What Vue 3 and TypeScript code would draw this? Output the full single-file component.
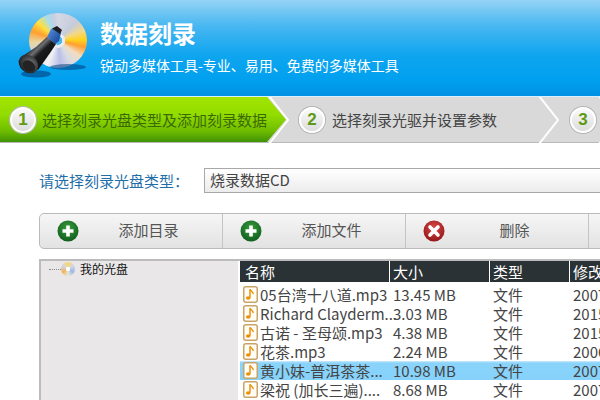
<template>
  <div class="page">
    <header class="banner">
      <div class="logo">
        <div class="disc"></div>
        <svg class="torch" width="100" height="96" viewBox="0 0 100 96">
          <defs>
            <linearGradient id="body" x1="0" y1="0" x2="1" y2="1">
              <stop offset="0" stop-color="#0e0f10" />
              <stop offset="0.32" stop-color="#2a2b2d" />
              <stop offset="0.42" stop-color="#6d6f72" />
              <stop offset="0.52" stop-color="#1a1b1c" />
              <stop offset="1" stop-color="#030303" />
            </linearGradient>
            <linearGradient id="cap" x1="0" y1="0" x2="1" y2="1">
              <stop offset="0" stop-color="#5b9ae6" />
              <stop offset="1" stop-color="#123a8c" />
            </linearGradient>
            <radialGradient id="lens" cx="0.55" cy="0.4" r="0.65">
              <stop offset="0" stop-color="#77797b" />
              <stop offset="1" stop-color="#161617" />
            </radialGradient>
          </defs>
          <ellipse cx="68" cy="67" rx="18" ry="3" fill="#00407c" opacity="0.55" />
          <ellipse cx="36" cy="74" rx="15" ry="3.5" fill="#00407c" opacity="0.6" />
          <path d="M47 37 L56 44 L50 53 L38 70 L21 57 L36 47 Z" fill="url(#body)" />
          <path d="M51 29 L57 27 L61 33 L59 41 L55 44 L47 37 Z" fill="url(#cap)" />
          <path d="M52 28.5 L57 26 L62 30 L60 34 Z" fill="#1d1f24" />
          <ellipse cx="28.5" cy="64" rx="10.5" ry="8.5" transform="rotate(38 28.5 64)" fill="url(#lens)" />
          <ellipse cx="29" cy="66" rx="7" ry="5" transform="rotate(38 29 66)" fill="#232324" />
        </svg>
      </div>
      <div class="titles">
        <h1>数据刻录</h1>
        <p>锐动多媒体工具-专业、易用、免费的多媒体工具</p>
      </div>
    </header>

    <nav class="steps">
      <div v-for="s in steps" :key="s.no" class="step" :class="{ active: s.active }" :style="{ width: s.width + 'px' }">
        <span class="num">{{ s.no }}</span>
        <span v-if="s.label" class="step-text">{{ s.label }}</span>
        <svg class="chevron" width="24" height="46" viewBox="0 0 24 46">
          <path d="M2 -1 L21 23 L2 47" fill="none" stroke="#fff" stroke-width="2" />
        </svg>
      </div>
    </nav>

    <main class="content">
      <div class="type-row">
        <label>请选择刻录光盘类型：</label>
        <div class="select">烧录数据CD</div>
      </div>

      <div class="toolbar">
        <div v-for="b in buttons" :key="b.label" class="tool">
          <svg width="22" height="22" viewBox="0 0 22 22">
            <defs>
              <radialGradient :id="'ball-' + b.kind" cx="0.5" cy="0.35" r="0.7">
                <stop offset="0" :stop-color="b.kind === 'add' ? '#3a9a3c' : '#dc4a4a'" />
                <stop offset="1" :stop-color="b.kind === 'add' ? '#0c5a1c' : '#8e1214'" />
              </radialGradient>
            </defs>
            <circle cx="11" cy="11" r="10.5" :fill="'url(#ball-' + b.kind + ')'" />
            <path v-if="b.kind === 'add'" d="M11 5.5v11M5.5 11h11" stroke="#fff" stroke-width="3.6" />
            <path v-else d="M7 7l8 8M15 7l-8 8" stroke="#fff" stroke-width="3.6" stroke-linecap="round" />
          </svg>
          <span class="tool-text">{{ b.label }}</span>
        </div>
      </div>

      <div class="panes">
        <div class="tree">
          <span class="dots"></span>
          <span class="mini-disc"></span>
          <span class="tree-label">我的光盘</span>
        </div>
        <div class="list">
          <div class="row head">
            <span class="c-name">名称</span>
            <span class="c-size">大小</span>
            <span class="c-type">类型</span>
            <span class="c-date">修改</span>
          </div>
          <div v-for="f in files" :key="f.name" class="row" :class="{ selected: f.selected }">
            <span class="c-name file">
              <svg width="15" height="17" viewBox="0 0 15 17">
                <rect x="0.75" y="0.75" width="13.5" height="15.5" rx="2" fill="#fffdf6" stroke="#c9a468" stroke-width="1.5" />
                <path d="M7 3.5v8.2" stroke="#e8920c" stroke-width="1.5" fill="none" />
                <path d="M7 3.2c.6 2.2 3.6 2.4 3.2 5" stroke="#e8920c" stroke-width="1.4" fill="none" />
                <ellipse cx="5.2" cy="12" rx="2.3" ry="1.8" fill="#e8920c" />
              </svg>
              <span>{{ f.name }}</span>
            </span>
            <span class="c-size">{{ f.size }}</span>
            <span class="c-type">文件</span>
            <span class="c-date">{{ f.date }}</span>
          </div>
        </div>
      </div>
    </main>
  </div>
</template>

<script setup lang="ts">
const steps = [
  { no: 1, label: '选择刻录光盘类型及添加刻录数据', width: 286, active: true },
  { no: 2, label: '选择刻录光驱并设置参数', width: 270, active: false },
  { no: 3, label: '', width: 60, active: false },
]

const buttons = [
  { label: '添加目录', kind: 'add' },
  { label: '添加文件', kind: 'add' },
  { label: '删除', kind: 'del' },
]

const files = [
  { name: '05台湾十八道.mp3', size: '13.45 MB', date: '2007' },
  { name: 'Richard Clayderm...', size: '3.03 MB', date: '2015' },
  { name: '古诺 - 圣母颂.mp3', size: '4.38 MB', date: '2015' },
  { name: '花茶.mp3', size: '2.24 MB', date: '2006' },
  { name: '黄小妹-普洱茶茶...', size: '10.98 MB', date: '2007', selected: true },
  { name: '梁祝 (加长三遍)....', size: '8.68 MB', date: '2007' },
]
</script>

<style>
html,
body {
  margin: 0;
  background: #fff;
}
</style>

<style scoped>
.page {
  width: 600px;
  height: 400px;
  overflow: hidden;
  background: #fff;
  font-family: "Noto Sans CJK SC", "Liberation Sans", sans-serif;
  color: #444;
}

.banner {
  height: 96px;
  box-sizing: border-box;
  display: flex;
  background: linear-gradient(#95d3f5 0, #4ab8f1 25px, #0fa5ef 55px, #00a0ef 80px, #0091e4 96px);
}

.logo {
  position: relative;
  width: 100px;
  height: 96px;
  flex: none;
}

.disc {
  position: absolute;
  left: 29px;
  top: 13px;
  width: 58px;
  height: 55px;
  border-radius: 50%;
  background:
    radial-gradient(circle at 50% 50%, #4cb4ea 0 4px, #e8edf2 4.5px 7px, transparent 7.5px),
    conic-gradient(#d4d8e4 0, #c6cbdc 45deg, #f2d98a 68deg, #ffd21e 88deg, #ff9f30 104deg, #f2dcc0 125deg, #d7dbe4 150deg, #b9bfe8 175deg, #f0f2f4 205deg, #c8cdd8 240deg, #e8d8a8 265deg, #ff9f30 290deg, #ffe040 312deg, #a6dcf0 335deg, #c8cede 350deg, #d4d8e4);
}

.torch {
  position: absolute;
  left: 0;
  top: 0;
}

.titles {
  padding-top: 15px;
  color: #fff;
}

.titles h1 {
  margin: 0;
  font-size: 24px;
  line-height: 36px;
  font-weight: 700;
}

.titles p {
  margin: 4px 0 0;
  font-size: 14px;
  line-height: 20px;
  white-space: nowrap;
}

.steps {
  height: 47px;
  box-sizing: border-box;
  display: flex;
  border-top: 1px solid #d8f0fb;
  background: #d9d9d9;
  border-bottom: 1px solid #b9b9b9;
  white-space: nowrap;
}

.step {
  position: relative;
  flex: none;
  box-sizing: border-box;
  display: flex;
  align-items: center;
  padding-left: 29px;
  gap: 7px;
  font-size: 15px;
  color: #444;
}

.step:last-child {
  padding-left: 30px;
}

.step.active {
  padding-left: 10px;
  gap: 6px;
  color: #3c6a00;
  z-index: 1;
  margin-right: -16px;
}

.step.active::before {
  content: "";
  position: absolute;
  inset: 0;
  z-index: -1;
  background: linear-gradient(#a2e400 0, #92dc00 18px, #6fbc00 34px, #3f9206 45px);
  clip-path: polygon(0 0, 267px 0, 286px 50%, 267px 100%, 0 100%);
}

.chevron {
  position: absolute;
  right: -21px;
  top: 0;
}

.step.active .chevron {
  right: -5px;
}

.num {
  flex: none;
  width: 22px;
  height: 22px;
  border-radius: 50%;
  border: 2px solid #fff;
  box-shadow: 0 0 0 1px #b4b4b4;
  background: linear-gradient(#fafafa, #dcdcdc);
  color: #5f9a16;
  font: 700 17px/22px "Liberation Sans", sans-serif;
  text-align: center;
}

.content {
  padding: 25px 0 0 39px;
}

.type-row {
  display: flex;
  align-items: center;
  height: 25px;
}

.type-row label {
  flex: none;
  width: 165px;
  font-size: 15px;
  color: #1f6ea8;
}

.select {
  flex: none;
  width: 420px;
  height: 25px;
  box-sizing: border-box;
  border: 1px solid #a8a8a8;
  background: linear-gradient(#fff, #ececec);
  padding-left: 5px;
  font-size: 15px;
  line-height: 22px;
  color: #444;
}

.toolbar {
  display: flex;
  width: 750px;
  height: 36px;
  box-sizing: border-box;
  margin-top: 20px;
  border: 1px solid #bbb;
  border-radius: 5px 0 0 5px;
  background: linear-gradient(#f6f6f6, #e2e2e2);
}

.tool {
  flex: none;
  width: 183px;
  box-sizing: border-box;
  display: flex;
  align-items: center;
  padding: 0 4px 0 17px;
  border-right: 1px solid #c4c4c4;
}

.tool-text {
  flex: 1;
  text-align: center;
  font-size: 15px;
  line-height: 20px;
  padding-bottom: 3px;
  color: #555;
}

.panes {
  display: flex;
  margin-top: 10px;
  height: 141px;
  border-top: 2px solid #bcbcbc;
}

.tree {
  flex: none;
  width: 199px;
  box-sizing: border-box;
  border-left: 2px solid #bcbcbc;
  background: #e9e7e8;
  display: flex;
  align-items: flex-start;
  padding: 0 0 0 8px;
}

.dots {
  width: 12px;
  margin-top: 8px;
  border-top: 1px dotted #888;
}

.mini-disc {
  width: 14px;
  height: 14px;
  margin-top: 1px;
  border-radius: 50%;
  background:
    radial-gradient(circle, #fff 0 2px, transparent 2.5px),
    conic-gradient(#ffd86a, #cfd6e8, #9fb7e8, #e8e8d8, #f2b45a, #cfd6e8, #ffd86a);
}

.tree-label {
  margin-left: 5px;
  font-size: 12px;
  line-height: 16px;
  color: #111;
}

.list {
  flex: none;
  width: 500px;
  margin-left: 2px;
  font-size: 15px;
}

.row {
  display: flex;
  height: 19px;
  line-height: 19px;
  color: #444;
  white-space: nowrap;
}

.row.head {
  height: 21px;
  line-height: 21px;
  margin-bottom: 3px;
  background: #2b3235;
  color: #fff;
}

.row.selected {
  background: linear-gradient(#cfeafa 0, #8ad4fb 2px, #86d2fb 100%);
}

.row span {
  box-sizing: border-box;
  flex: none;
}

.c-name {
  width: 150px;
  padding-left: 5px;
}

.c-size {
  width: 100px;
  padding-left: 3px;
}

.c-type {
  width: 80px;
  padding-left: 3px;
}

.c-date {
  width: 170px;
  padding-left: 3px;
}

.row.head .c-name,
.row.head .c-size,
.row.head .c-type {
  border-right: 1px solid #fff;
}

.file {
  display: flex;
  align-items: center;
  gap: 2px;
  padding-left: 3px;
}

.file svg {
  flex: none;
}
</style>
